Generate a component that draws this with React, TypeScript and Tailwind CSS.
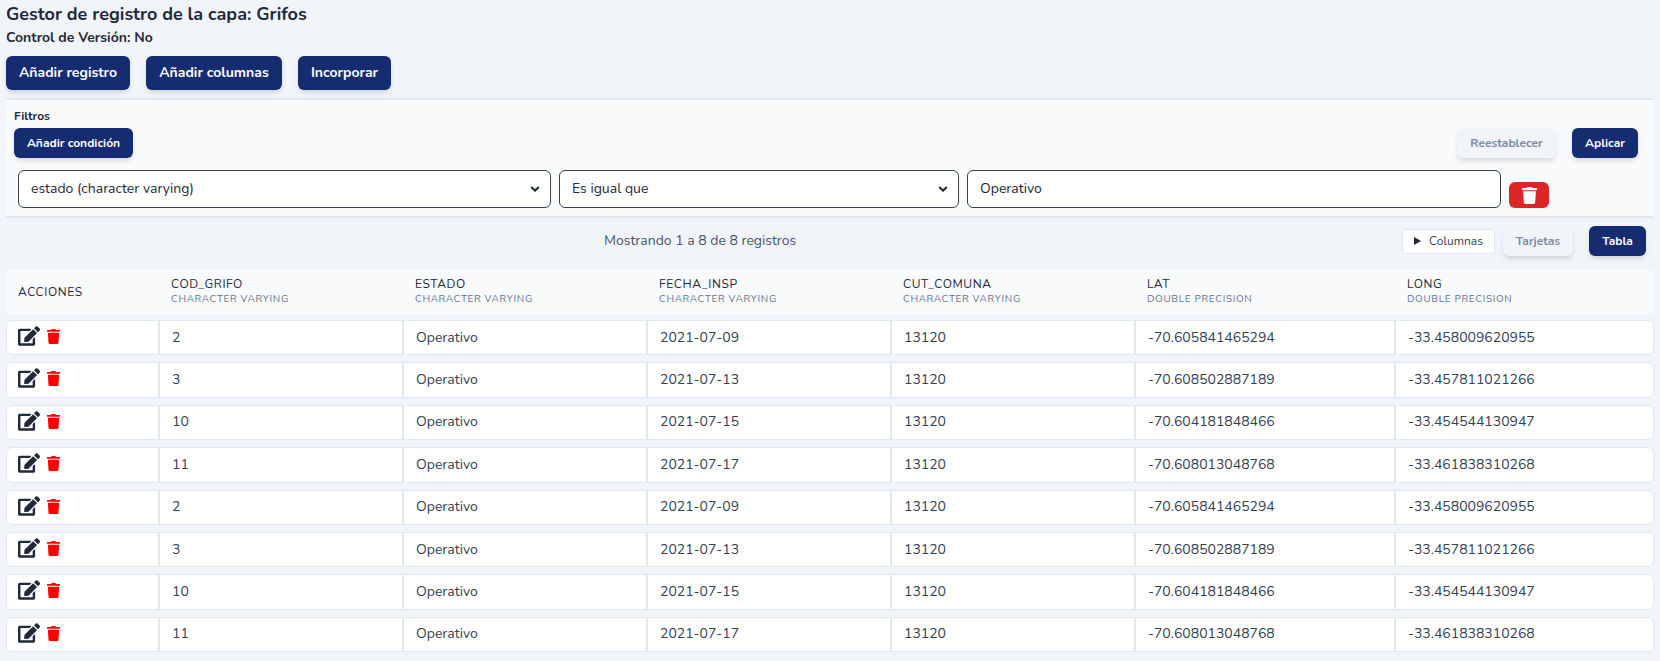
import { FaEdit, FaTrash } from "react-icons/fa";

const columns = [
  { name: "COD_GRIFO", type: "CHARACTER VARYING" },
  { name: "ESTADO", type: "CHARACTER VARYING" },
  { name: "FECHA_INSP", type: "CHARACTER VARYING" },
  { name: "CUT_COMUNA", type: "CHARACTER VARYING" },
  { name: "LAT", type: "DOUBLE PRECISION" },
  { name: "LONG", type: "DOUBLE PRECISION" },
];

const base = [
  ["2", "Operativo", "2021-07-09", "13120", "-70.605841465294", "-33.458009620955"],
  ["3", "Operativo", "2021-07-13", "13120", "-70.608502887189", "-33.457811021266"],
  ["10", "Operativo", "2021-07-15", "13120", "-70.604181848466", "-33.454544130947"],
  ["11", "Operativo", "2021-07-17", "13120", "-70.608013048768", "-33.461838310268"],
];
const rows = [...base, ...base];

const gridCols = "grid grid-cols-[153px_244px_244px_244px_244px_260px_259px]";
const navy = "rounded-md bg-[#152c70] font-bold text-white shadow-md";
const muted = "rounded-md bg-[#f1f5f9] font-bold text-[#7f8aa0] shadow-md";

function Chevron() {
  return (
    <svg width="10" height="6" viewBox="0 0 10 6" className="ml-auto mr-[-2px]">
      <path d="M1.2 1l3.8 3.6L8.8 1" fill="none" stroke="#1f2937" strokeWidth="2" />
    </svg>
  );
}

export default function App() {
  return (
    <div className="h-[661px] overflow-hidden bg-[#f1f5f9] px-1.5 text-[#1e293b] font-['Nunito','Lato','Noto_Sans',sans-serif]">
      <h1 className="text-lg leading-7 font-bold">Gestor de registro de la capa: Grifos</h1>
      <p className="text-sm leading-[20px] font-bold">Control de Versión: No</p>
      <div className="mt-2 flex gap-4">
        <button className={`h-[34px] w-[124px] text-sm ${navy}`}>Añadir registro</button>
        <button className={`h-[34px] w-[136px] text-sm ${navy}`}>Añadir columnas</button>
        <button className={`h-[34px] w-[93px] text-sm ${navy}`}>Incorporar</button>
      </div>

      <div className="mt-2 h-[120px] border-y-2 border-[#e2e8f0] bg-[#f8fafc] pl-2 pr-4">
        <div className="pt-2 text-xs leading-4 font-bold">Filtros</div>
        <div className="mt-1 flex items-center">
          <button className={`h-[30px] w-[119px] text-xs ${navy}`}>Añadir condición</button>
          <button className={`ml-auto h-[30px] w-[99px] text-xs ${muted}`}>Reestablecer</button>
          <button className={`ml-4 h-[30px] w-[66px] text-xs ${navy}`}>Aplicar</button>
        </div>
        <div className="mt-3 flex items-end gap-2 pl-1">
          <div className="flex h-[38px] w-[533px] items-center rounded-md border border-[#374151] bg-white px-3 text-sm">
            estado (character varying)
            <Chevron />
          </div>
          <div className="flex h-[38px] w-[400px] items-center rounded-md border border-[#374151] bg-white px-3 text-sm">
            Es igual que
            <Chevron />
          </div>
          <div className="flex h-[38px] w-[534px] items-center rounded-md border border-[#374151] bg-white px-3 text-sm">Operativo</div>
          <button className="flex h-[26px] w-10 items-center justify-center rounded-md bg-[#dc2626] text-white">
            <FaTrash size={17} />
          </button>
        </div>
      </div>

      <div className="flex h-[52px] items-center pb-1.5 pr-2">
        <div className="ml-[598px] text-sm text-[#475569]">Mostrando 1 a 8 de 8 registros</div>
        <div className="ml-auto flex items-center">
          <div className="flex h-[25px] w-[93px] items-center justify-center gap-2 rounded border border-[#e2e8f0] bg-white text-xs text-[#334155]">
            <svg width="7" height="8" viewBox="0 0 7 8"><path d="M0 0l7 4-7 4z" fill="#1e293b" /></svg>
            Columnas
          </div>
          <button className={`ml-2 h-[29px] w-[70px] text-xs ${muted}`}>Tarjetas</button>
          <button className={`ml-4 h-[30px] w-[57px] text-xs ${navy}`}>Tabla</button>
        </div>
      </div>

      <div className={`${gridCols} h-11 items-center bg-[#f8fafc]`}>
        <div className="pl-3 text-xs tracking-wider">ACCIONES</div>
        {columns.map((c) => (
          <div key={c.name} className="pl-3">
            <div className="text-xs leading-[15px] tracking-wider">{c.name}</div>
            <div className="text-[10px] leading-[15px] tracking-[0.65px] text-[#64748b]">{c.type}</div>
          </div>
        ))}
      </div>

      <div className="mt-1.5 flex flex-col gap-[7px]">
        {rows.map((r, i) => (
          <div key={i} className={`${gridCols} h-[35.4px] rounded-md border border-[#e2e8f0] bg-white text-sm text-[#334155]`}>
            <div className="flex items-start gap-[6px] border-r-2 border-[#e2e8f0] pl-[11px] pt-1">
              <FaEdit size={22} className="text-[#1e293b]" />
              <FaTrash size={15} className="mt-1 text-[#ff0000]" />
            </div>
            {r.map((v, j) => (
              <div key={j} className={`flex items-center pl-3 ${j < 5 ? "border-r-2 border-[#e2e8f0]" : ""}`}>{v}</div>
            ))}
          </div>
        ))}
      </div>
    </div>
  );
}
